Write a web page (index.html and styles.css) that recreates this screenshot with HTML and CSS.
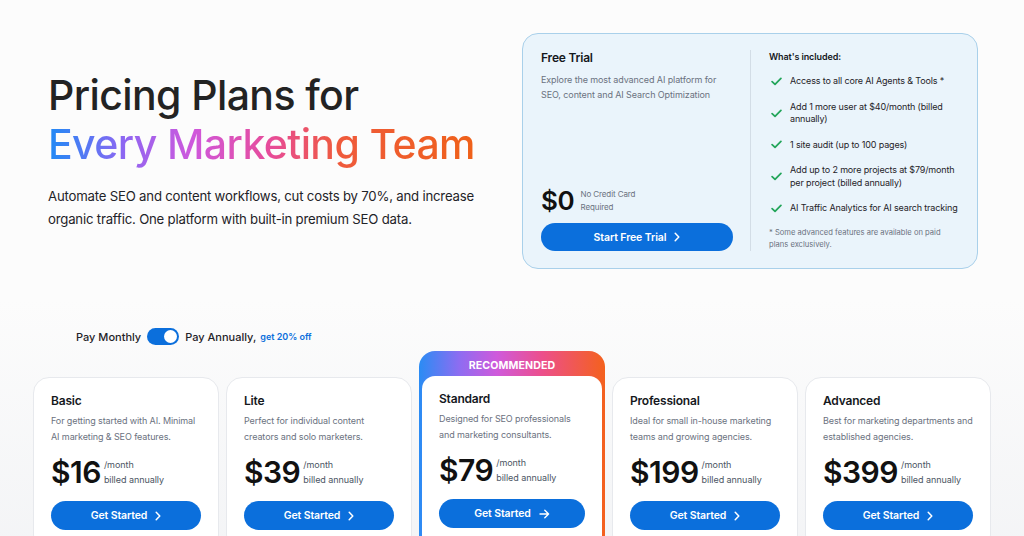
FILE: index.html
```html
<!DOCTYPE html>
<html lang="en">
<head>
<meta charset="utf-8">
<title>Pricing Plans</title>
<link rel="stylesheet" href="styles.css">
</head>
<body>
<div class="page">
  <section class="hero">
    <div class="hero-text">
      <h1 class="title"><span class="line1">Pricing Plans for</span><span class="grad">Every Marketing Team</span></h1>
      <p class="lead">Automate SEO and content workflows, cut costs by 70%, and increase organic traffic. One platform with built-in premium SEO data.</p>
    </div>
    <div class="trial">
      <div class="trial-main">
        <h2 class="trial-title">Free Trial</h2>
        <p class="trial-desc">Explore the most advanced AI platform for SEO, content and AI Search Optimization</p>
        <div class="trial-price"><span class="trial-amount">$0</span><span class="note">No Credit Card<br>Required</span></div>
        <a class="btn trial-btn" href="#">Start Free Trial <svg class="chev" viewBox="0 0 6 10" width="6" height="10"><path d="M1.2 1.2 L4.8 5 L1.2 8.8" fill="none" stroke="#fff" stroke-width="1.5" stroke-linecap="round" stroke-linejoin="round"/></svg></a>
      </div>
      <div class="trial-divider"></div>
      <div class="trial-incl">
        <h3 class="incl-title">What's included:</h3>
        <ul class="incl-list">
          <li><svg class="check" viewBox="0 0 12 9" width="11" height="9"><path d="M1.2 4.6 L4.4 7.6 L10.8 1.2" fill="none" stroke="#23a55a" stroke-width="1.9" stroke-linecap="round" stroke-linejoin="round"/></svg><span>Access to all core AI Agents &amp; Tools *</span></li>
          <li><svg class="check" viewBox="0 0 12 9" width="11" height="9"><path d="M1.2 4.6 L4.4 7.6 L10.8 1.2" fill="none" stroke="#23a55a" stroke-width="1.9" stroke-linecap="round" stroke-linejoin="round"/></svg><span>Add 1 more user at $40/month (billed annually)</span></li>
          <li><svg class="check" viewBox="0 0 12 9" width="11" height="9"><path d="M1.2 4.6 L4.4 7.6 L10.8 1.2" fill="none" stroke="#23a55a" stroke-width="1.9" stroke-linecap="round" stroke-linejoin="round"/></svg><span>1 site audit (up to 100 pages)</span></li>
          <li><svg class="check" viewBox="0 0 12 9" width="11" height="9"><path d="M1.2 4.6 L4.4 7.6 L10.8 1.2" fill="none" stroke="#23a55a" stroke-width="1.9" stroke-linecap="round" stroke-linejoin="round"/></svg><span>Add up to 2 more projects at $79/month per project (billed annually)</span></li>
          <li><svg class="check" viewBox="0 0 12 9" width="11" height="9"><path d="M1.2 4.6 L4.4 7.6 L10.8 1.2" fill="none" stroke="#23a55a" stroke-width="1.9" stroke-linecap="round" stroke-linejoin="round"/></svg><span>AI Traffic Analytics for AI search tracking</span></li>
        </ul>
        <p class="footnote">* Some advanced features are available on paid plans exclusively.</p>
      </div>
    </div>
  </section>

  <div class="toggle-row">
    <span class="toggle-label">Pay Monthly</span>
    <span class="switch"><span class="knob"></span></span>
    <span class="toggle-label">Pay Annually,</span>
    <span class="discount">get 20% off</span>
  </div>

  <section class="plans">
    <div class="card">
      <h3 class="card-title">Basic</h3>
      <p class="card-desc">For getting started with AI. Minimal AI marketing &amp; SEO features.</p>
      <div class="price"><span class="amount">$16</span><span class="per">/month<br>billed annually</span></div>
      <a class="btn card-btn" href="#">Get Started <svg class="chev" viewBox="0 0 6 10" width="6" height="10"><path d="M1.2 1.2 L4.8 5 L1.2 8.8" fill="none" stroke="#fff" stroke-width="1.5" stroke-linecap="round" stroke-linejoin="round"/></svg></a>
    </div>
    <div class="card">
      <h3 class="card-title">Lite</h3>
      <p class="card-desc">Perfect for individual content creators and solo marketers.</p>
      <div class="price"><span class="amount">$39</span><span class="per">/month<br>billed annually</span></div>
      <a class="btn card-btn" href="#">Get Started <svg class="chev" viewBox="0 0 6 10" width="6" height="10"><path d="M1.2 1.2 L4.8 5 L1.2 8.8" fill="none" stroke="#fff" stroke-width="1.5" stroke-linecap="round" stroke-linejoin="round"/></svg></a>
    </div>
    <div class="card-rec">
      <div class="rec-label">RECOMMENDED</div>
      <div class="rec-inner">
        <h3 class="card-title">Standard</h3>
        <p class="card-desc">Designed for SEO professionals and marketing consultants.</p>
        <div class="price"><span class="amount">$79</span><span class="per">/month<br>billed annually</span></div>
        <a class="btn card-btn" href="#">Get Started <svg class="arrow" viewBox="0 0 11 10" width="11" height="10"><path d="M1 5 H9.6 M5.8 1.2 L9.6 5 L5.8 8.8" fill="none" stroke="#fff" stroke-width="1.4" stroke-linecap="round" stroke-linejoin="round"/></svg></a>
      </div>
    </div>
    <div class="card">
      <h3 class="card-title">Professional</h3>
      <p class="card-desc">Ideal for small in-house marketing teams and growing agencies.</p>
      <div class="price"><span class="amount">$199</span><span class="per">/month<br>billed annually</span></div>
      <a class="btn card-btn" href="#">Get Started <svg class="chev" viewBox="0 0 6 10" width="6" height="10"><path d="M1.2 1.2 L4.8 5 L1.2 8.8" fill="none" stroke="#fff" stroke-width="1.5" stroke-linecap="round" stroke-linejoin="round"/></svg></a>
    </div>
    <div class="card">
      <h3 class="card-title">Advanced</h3>
      <p class="card-desc">Best for marketing departments and established agencies.</p>
      <div class="price"><span class="amount">$399</span><span class="per">/month<br>billed annually</span></div>
      <a class="btn card-btn" href="#">Get Started <svg class="chev" viewBox="0 0 6 10" width="6" height="10"><path d="M1.2 1.2 L4.8 5 L1.2 8.8" fill="none" stroke="#fff" stroke-width="1.5" stroke-linecap="round" stroke-linejoin="round"/></svg></a>
    </div>
  </section>
</div>
</body>
</html>
```

FILE: styles.css
```css
* {
  box-sizing: border-box;
  margin: 0;
  padding: 0;
}

html, body {
  height: 100%;
}

body {
  font-family: Inter, "Noto Sans", "Liberation Sans", sans-serif;
  color: #111827;
  background: linear-gradient(180deg, #fcfcfc 0px, #fcfcfc 300px, #f3f4f6 560px);
  overflow: hidden;
}

.page {
  width: 1024px;
}

/* ---------- hero ---------- */
.hero {
  display: flex;
  align-items: center;
  justify-content: space-between;
  padding: 33px 46px 0 48px;
}

.hero-text {
  width: 440px;
}

.title {
  font-size: 41px;
  line-height: 49px;
  font-weight: 500;
  letter-spacing: -0.6px;
  color: #232323;
}

.title .line1 {
  display: block;
}

.title .grad {
  display: inline-block;
  background: linear-gradient(90deg, #1f8af5 0%, #8f66f2 18%, #cf58dc 34%, #e74c9a 52%, #ef5a3c 68%, #ef6119 100%);
  -webkit-background-clip: text;
  background-clip: text;
  color: transparent;
}

.lead {
  margin-top: 16px;
  font-size: 13.2px;
  line-height: 23px;
  letter-spacing: -0.2px;
  color: #1f2328;
}

/* ---------- free trial card ---------- */
.trial {
  width: 456px;
  height: 236px;
  display: flex;
  background: #eaf4fb;
  border: 1px solid #a9d0ea;
  border-radius: 16px;
  padding: 16px 14px 17px 18px;
}

.trial-main {
  width: 192px;
  display: flex;
  flex-direction: column;
}

.trial-title {
  font-size: 12px;
  line-height: 16px;
  font-weight: 600;
  letter-spacing: -0.2px;
  color: #15181d;
}

.trial-desc {
  margin-top: 7px;
  font-size: 9px;
  line-height: 14.5px;
  letter-spacing: -0.1px;
  color: #6b7280;
}

.trial-price {
  margin-top: auto;
  display: flex;
  align-items: center;
  gap: 6px;
}

.trial-amount {
  font-size: 26px;
  line-height: 30px;
  font-weight: 600;
  letter-spacing: -0.3px;
  color: #111;
}

.note {
  font-size: 8px;
  line-height: 13px;
  letter-spacing: -0.1px;
  color: #6b7280;
}

.btn {
  display: flex;
  align-items: center;
  justify-content: center;
  gap: 8px;
  border-radius: 15px;
  background: #0b6fdc;
  color: #fff;
  font-size: 10.5px;
  font-weight: 600;
  letter-spacing: -0.1px;
  text-decoration: none;
}

.trial-btn {
  margin-top: 7px;
  height: 28px;
}

.trial-divider {
  width: 1px;
  background: #d3dde6;
  margin: 0 17px;
}

.trial-incl {
  flex: 1;
  padding-left: 1px;
}

.incl-title {
  font-size: 9px;
  line-height: 14px;
  font-weight: 600;
  letter-spacing: -0.1px;
  color: #15181d;
}

.incl-list {
  list-style: none;
  margin-top: 11px;
  display: flex;
  flex-direction: column;
  gap: 13px;
}

.incl-list li {
  display: flex;
  align-items: center;
  gap: 8px;
  font-size: 9px;
  line-height: 12.5px;
  letter-spacing: -0.15px;
  color: #1f2328;
}

.check {
  flex: none;
  margin-left: 2px;
}

.footnote {
  margin-top: 12px;
  padding-right: 12px;
  font-size: 7.6px;
  line-height: 12.3px;
  color: #6b7280;
}

/* ---------- toggle ---------- */
.toggle-row {
  display: flex;
  align-items: center;
  gap: 6px;
  margin-top: 59px;
  padding-left: 76px;
  height: 17px;
}

.toggle-label {
  font-size: 11px;
  font-weight: 500;
  color: #1f2328;
}

.switch {
  width: 32px;
  height: 17px;
  border-radius: 9px;
  background: #0b6fdc;
  display: flex;
  align-items: center;
  justify-content: flex-end;
  padding-right: 2px;
}

.knob {
  width: 13px;
  height: 13px;
  border-radius: 50%;
  background: #fff;
}

.discount {
  margin-left: -2px;
  font-size: 9px;
  font-weight: 600;
  color: #0b6fdc;
}

/* ---------- plans ---------- */
.plans {
  display: grid;
  grid-template-columns: repeat(5, 186px);
  column-gap: 7px;
  align-items: end;
  padding-left: 33px;
  margin-top: 6px;
}

.card {
  background: #fff;
  border: 1px solid #e7e9ed;
  border-radius: 16px;
  padding: 15px 17px 20px;
}

.card-rec {
  background: linear-gradient(90deg, #2a8cf4 0%, #8f6cf1 22%, #cf5adb 42%, #ec4f8c 66%, #f4611d 100%);
  border-radius: 16px;
  padding: 0 3px 3px;
}

.rec-label {
  height: 25px;
  padding-top: 3px;
  display: flex;
  align-items: center;
  justify-content: center;
  color: #fff;
  font-size: 10.6px;
  font-weight: 700;
  letter-spacing: 0.1px;
}

.rec-inner {
  background: #fff;
  border-radius: 13px;
  padding: 15px 17px 20px;
}

.card-title {
  font-size: 12px;
  line-height: 16px;
  font-weight: 600;
  letter-spacing: -0.2px;
  color: #15181d;
}

.card-desc {
  margin-top: 4px;
  font-size: 9px;
  line-height: 15.5px;
  letter-spacing: -0.1px;
  color: #6b7280;
}

.price {
  margin-top: 12px;
  display: flex;
  align-items: center;
  gap: 3px;
}

.amount {
  font-size: 30px;
  line-height: 32px;
  font-weight: 600;
  letter-spacing: -0.5px;
  color: #111;
}

.per {
  font-size: 9px;
  line-height: 15px;
  letter-spacing: -0.05px;
  color: #4b5563;
}

.card-btn {
  margin-top: 13px;
  height: 29px;
}
```
